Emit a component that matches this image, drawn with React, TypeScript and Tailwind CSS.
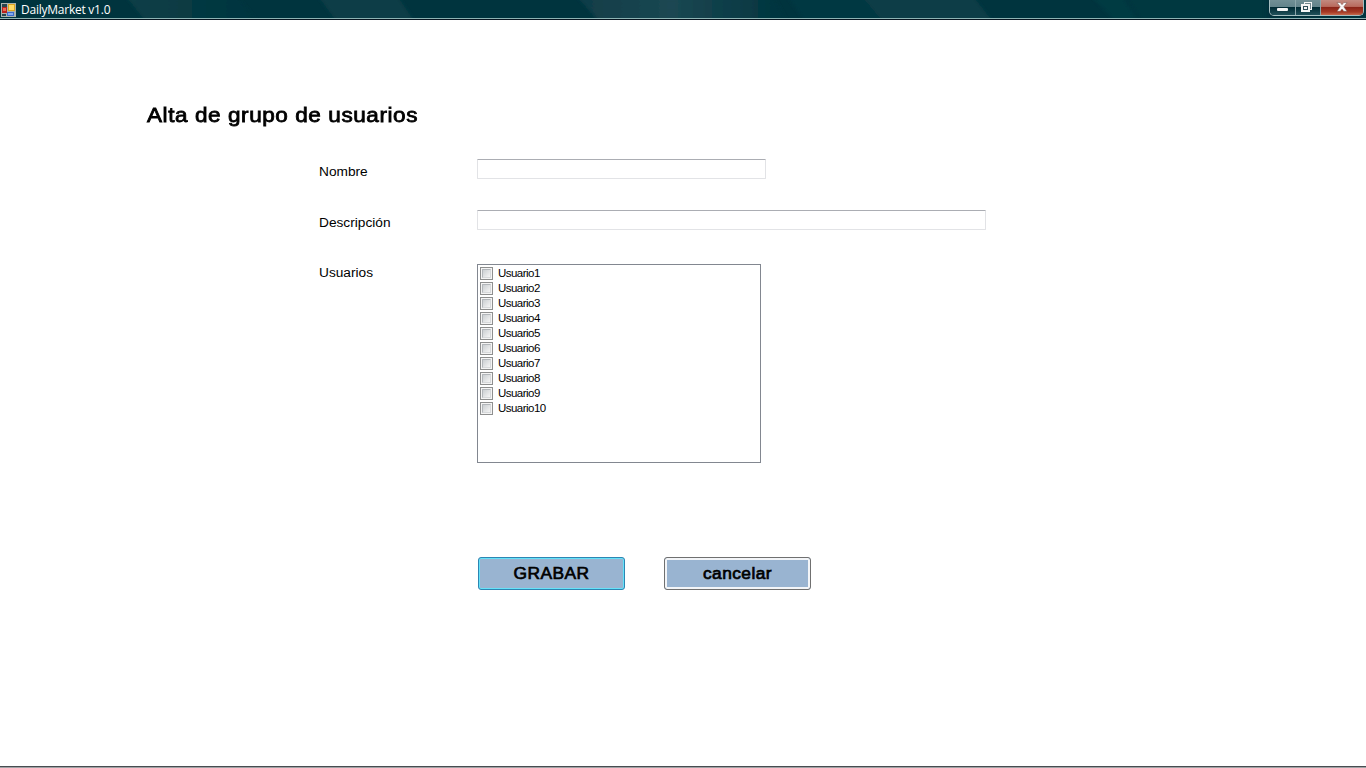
import React from 'react';

const users = Array.from({ length: 10 }, (_, i) => `Usuario${i + 1}`);

function AppIcon() {
  return (
    <svg width="15" height="14" viewBox="0 0 15 14" shapeRendering="crispEdges">
      <rect width="15" height="14" fill="#a9b3ad" />
      <rect x="1" y="1" width="5" height="3" fill="#26454d" />
      <rect x="1" y="4" width="5" height="6" fill="#b8221c" />
      <rect x="2" y="5" width="3" height="3" fill="#ea6a52" />
      <rect x="1" y="11" width="4" height="2" fill="#26454d" />
      <rect x="7" y="1" width="7" height="7" fill="#dba520" />
      <rect x="8" y="2" width="5" height="5" fill="#ffdc65" />
      <rect x="6" y="9" width="7" height="4" fill="#3d6ccb" />
      <rect x="7" y="10" width="5" height="2" fill="#85abee" />
    </svg>
  );
}

function TitleBar() {
  return (
    <header className="relative flex h-5 shrink-0 justify-between border-b border-[#07141f] bg-[#00343e]">
      <svg className="absolute inset-0" width="1366" height="18" viewBox="0 0 1366 18">
        <defs>
          <linearGradient id="sheen">
            <stop offset="0" stopColor="#103d48" />
            <stop offset="0.45" stopColor="#1b4752" />
            <stop offset="1" stopColor="#00343e" />
          </linearGradient>
          <linearGradient id="left">
            <stop offset="0" stopColor="#0d3f47" />
            <stop offset="1" stopColor="#00343e" />
          </linearGradient>
          <filter id="soft" x="-5%" width="110%" y="-20%" height="140%">
            <feGaussianBlur stdDeviation="2 0" />
          </filter>
        </defs>
        <g filter="url(#soft)">
          <path d="M129 0H240L255 18H143Z" fill="url(#left)" />
          <path d="M321 0H400L412 18H334Z" fill="#0c3c47" />
          <path d="M580 0H775L785 18H596Z" fill="url(#sheen)" />
          <path d="M790 0H865L880 18H803Z" fill="#063943" />
          <path d="M865 0H976L990 18H880Z" fill="#0c3c47" />
          <path d="M1095 0H1125L1136 18H1112Z" fill="#063a43" />
          <path d="M1128 0H1266V18H1140Z" fill="#023841" />
        </g>
      </svg>
      <div className="relative flex w-full justify-between border-b border-[#8db3b3]">
        <div className="flex items-start pl-px pt-[3px]">
          <AppIcon />
          <span className="ml-[5px] -mt-[1px] whitespace-nowrap font-['Open_Sans',sans-serif] text-[12px] leading-[16px] tracking-[-0.24px] text-white">
            DailyMarket v1.0
          </span>
        </div>
        <div className="mr-[2px] flex h-4 w-[95px] overflow-hidden rounded-b-[5px] border border-t-0 border-[#a5bdc0] shadow-[0_0_1px_#001c24]">
          <button aria-label="Minimizar" className="flex w-[26px] justify-center border-r border-[#8ba5aa] bg-[linear-gradient(#718f95_0,#63848b_45%,#002b35_50%,#21515a_100%)] pt-[8px]">
            <span className="h-[3px] w-[11px] rounded-[1px] bg-[#f4f5f5] shadow-[0_0_1px_#203a43]" />
          </button>
          <button aria-label="Restaurar" className="flex w-[25px] justify-center border-r border-[#8ba5aa] bg-[linear-gradient(#718f95_0,#63848b_45%,#002b35_50%,#21515a_100%)] pr-[3px] pt-[2px]">
            <svg width="11" height="10" viewBox="0 0 11 10" shapeRendering="crispEdges">
              <rect x="3" width="8" height="8" fill="#f4f5f5" />
              <rect x="4" y="1" width="6" height="6" fill="#71878e" />
              <rect y="2" width="9" height="8" fill="#f4f5f5" />
              <rect x="2" y="4" width="5" height="4" fill="#304f5a" />
              <rect x="3" y="5" width="3" height="2" fill="#f4f5f5" />
            </svg>
          </button>
          <button aria-label="Cerrar" className="flex flex-1 justify-center bg-[linear-gradient(#c28a80_0,#b96b5e_43%,#8b2418_49%,#a63925_80%,#c66a4c_100%)] pr-[1px] pt-[2px]">
            <svg width="12" height="10" viewBox="0 0 12 10">
              <path d="M1 .5H4.2L6 2.7L7.8 .5H11L7.8 4.8L11 9.3H7.7L6 7L4.3 9.3H1L4.2 4.8Z" fill="#f8f6f6" stroke="#77504b" strokeWidth=".5" />
            </svg>
          </button>
        </div>
      </div>
    </header>
  );
}

function Label({ children }: { children: React.ReactNode }) {
  return <span className="block w-[158px] shrink-0 text-[13.7px] leading-4">{children}</span>;
}

export default function App() {
  return (
    <div className="flex h-[768px] w-[1366px] flex-col overflow-hidden bg-white font-['Liberation_Sans',Arial,sans-serif] text-black">
      <TitleBar />
      <main className="flex flex-1 flex-col pl-[147px] pt-[82px]">
        <h1 className="h-[57px] origin-left scale-x-[1.11] whitespace-nowrap text-[20.3px] font-normal leading-[26px] tracking-[0.52px] [-webkit-text-stroke:0.8px_#000]">
          Alta de grupo de usuarios
        </h1>
        <form className="flex flex-col pl-[172px]" onSubmit={(e) => e.preventDefault()}>
          <label className="flex h-[51px] items-start">
            <span className="pt-[5px]"><Label>Nombre</Label></span>
            <input className="h-5 w-[289px] rounded-[1px] border border-[#e2e3e6] border-t-[#abadb3] bg-white px-1 text-[13px] outline-none" />
          </label>
          <label className="flex h-[54px] items-start">
            <span className="pt-[5px]"><Label>Descripción</Label></span>
            <input className="h-5 w-[509px] rounded-[1px] border border-[#e2e3e6] border-t-[#abadb3] bg-white px-1 text-[13px] outline-none" />
          </label>
          <div className="flex items-start">
            <span className="pt-[0.5px]"><Label>Usuarios</Label></span>
            <ul className="flex h-[199px] w-[284px] flex-col border border-[#828790] pl-[2px] pt-[1px]">
              {users.map((user) => (
                <li key={user} className="flex h-[15px] items-center">
                  <span className="flex size-[13px] items-center justify-center border border-[#8e8f8f] bg-[#f4f4f4]">
                    <span className="size-[9px] border border-[#b3b7bb] border-r-[#d7d9db] border-b-[#d7d9db] bg-linear-to-br from-[#cbcfd2] to-[#f5f5f5]" />
                  </span>
                  <span className="ml-[5px] text-[11.5px] leading-[15px] tracking-[-0.53px]">{user}</span>
                </li>
              ))}
            </ul>
          </div>
          <div className="flex gap-[39px] pl-[159px] pt-[94px]">
            <button className="h-[33px] w-[147px] rounded-[3px] border border-[#2c86b3] bg-[#99b4d1] text-[17.33px] leading-[29px] tracking-[0.5px] shadow-[inset_0_0_0_1px_#65e2f9] [-webkit-text-stroke:0.7px_#000]">
              GRABAR
            </button>
            <button className="h-[33px] w-[147px] rounded-[3px] border border-[#707070] bg-[#99b4d1] text-[17.33px] leading-[29px] tracking-[0.45px] shadow-[inset_0_0_0_2px_#f3f5f8] [-webkit-text-stroke:0.7px_#000]">
              cancelar
            </button>
          </div>
        </form>
      </main>
      <footer className="h-[2px] shrink-0 border-t border-[#484c50] bg-[#a0a3a5]" />
    </div>
  );
}
